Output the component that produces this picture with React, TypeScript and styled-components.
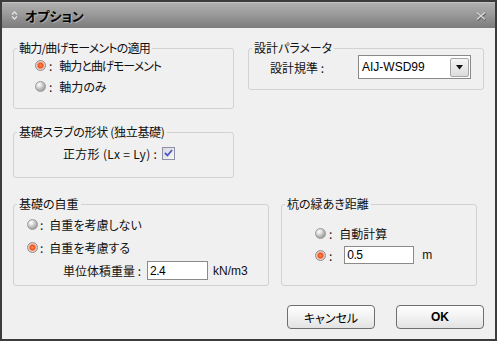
import React from 'react';
import styled, { createGlobalStyle } from 'styled-components';

const Global = createGlobalStyle`
  html, body { margin: 0; padding: 0; background: #f0f0f0; }
  body {
    font-family: "Noto Sans CJK JP", "Liberation Sans", sans-serif;
    font-size: 12px;
    font-feature-settings: "palt";
    color: #111;
  }
  * { box-sizing: border-box; }
`;

const Window = styled.div`
  width: 497px;
  height: 341px;
  border: 2px solid #3c3c3c;
  background: #f0f0f0;
  display: flex;
  flex-direction: column;
`;

const TitleBar = styled.div`
  height: 26px;
  flex: none;
  display: flex;
  align-items: center;
  padding: 0 7px 0 9px;
  background: linear-gradient(#b0b0b0, #9a9a9a 45%, #868686 80%, #7c7c7c);
  border-top: 1px solid #c4c4c4;
`;

const Title = styled.span`
  margin-left: 7px;
  font-weight: bold;
  font-size: 13px;
  color: #050505;
  text-shadow: 1px 1px 0 rgba(255, 255, 255, 0.3);
`;

const CloseBtn = styled.div`
  margin-left: auto;
  width: 14px;
  height: 12px;
  display: flex;
  align-items: center;
  justify-content: center;
`;

const Body = styled.div`
  flex: 1;
  display: flex;
  flex-direction: column;
  padding: 20px 11px 0 11px;
`;

const TopSection = styled.div`
  display: flex;
  align-items: flex-start;
  gap: 14px;
`;

const LeftCol = styled.div`
  display: flex;
  flex-direction: column;
  gap: 23px;
`;

const BottomRow = styled.div`
  display: flex;
  gap: 12px;
  margin-top: 26px;
`;

const Group = styled.div<{ $w: number; $h: number }>`
  width: ${(p) => p.$w}px;
  height: ${(p) => p.$h}px;
  border: 1px solid #d2d2d2;
  border-radius: 3px;
  display: flex;
  flex-direction: column;
`;

const Legend = styled.div<{ $ls?: number }>`
  margin: -8px 0 0 3px;
  padding: 0 2px;
  height: 14px;
  line-height: 14px;
  width: fit-content;
  background: #f0f0f0;
  color: #111;
  letter-spacing: ${(p) => p.$ls ?? 0}px;
`;

const GroupBody = styled.div<{ $pt?: number; $pl?: number; $pr?: number }>`
  display: flex;
  flex-direction: column;
  padding: ${(p) => p.$pt ?? 0}px ${(p) => p.$pr ?? 0}px 0 ${(p) => p.$pl ?? 0}px;
`;

const Row = styled.div<{ $h: number; $indent?: number }>`
  height: ${(p) => p.$h}px;
  display: flex;
  align-items: center;
  padding-left: ${(p) => p.$indent ?? 0}px;
  white-space: nowrap;
`;

const Radio = styled.span<{ $on?: boolean }>`
  flex: none;
  width: 11px;
  height: 11px;
  border-radius: 50%;
  border: 1px solid ${(p) => (p.$on ? '#a08a80' : '#9a9a9a')};
  background: ${(p) =>
    p.$on
      ? 'radial-gradient(circle at 50% 50%, #ff8a50 0, #f0501c 2.5px, #e8c0b0 3.5px, #d8d8d8 4.5px, #bcbcbc 6px)'
      : 'radial-gradient(circle at 35% 30%, #ffffff 0, #e6e6e6 2px, #c4c4c4 4px, #a4a4a4 6px)'};
`;

const Colon = styled.span<{ $ml: number }>`
  margin-left: ${(p) => p.$ml}px;
`;

const RadioText = styled.span<{ $ml: number; $ls?: number }>`
  margin-left: ${(p) => p.$ml}px;
  letter-spacing: ${(p) => p.$ls ?? 0}px;
`;

const Label = styled.span<{ $ls?: number }>`
  letter-spacing: ${(p) => p.$ls ?? 0}px;
`;

const Checkbox = styled.span`
  flex: none;
  margin-left: 5px;
  width: 13px;
  height: 13px;
  border: 1px solid #8e8fa8;
  background: linear-gradient(135deg, #d8d8dc, #f8f8f8);
  display: flex;
  align-items: center;
  justify-content: center;
`;

const Select = styled.div`
  margin-left: auto;
  width: 113px;
  height: 24px;
  border: 1px solid #8a8a8a;
  background: #fff;
  display: flex;
  align-items: center;
  padding: 0 1px 0 3px;
  font-family: "Liberation Sans", Arial, sans-serif;
  font-size: 12px;
  color: #000;
`;

const SelectButton = styled.div`
  margin-left: auto;
  width: 19px;
  height: 19px;
  border: 1px solid #a6a6a6;
  border-radius: 2px;
  background: linear-gradient(#f6f6f6, #dcdcdc);
  display: flex;
  align-items: center;
  justify-content: center;
`;

const TextInput = styled.div<{ $w: number; $h: number; $ml: number }>`
  margin-left: ${(p) => p.$ml}px;
  width: ${(p) => p.$w}px;
  height: ${(p) => p.$h}px;
  border: 1px solid #8a8a8a;
  background: #fff;
  display: flex;
  align-items: center;
  padding-left: 2px;
  font-family: "Liberation Sans", Arial, sans-serif;
  font-size: 12px;
  letter-spacing: -0.5px;
  color: #000;
`;

const Unit = styled.span<{ $ml: number }>`
  margin-left: ${(p) => p.$ml}px;
  font-family: "Liberation Sans", Arial, sans-serif;
  font-size: 12px;
`;

const ButtonRow = styled.div`
  display: flex;
  justify-content: flex-end;
  gap: 21px;
  margin-top: 19px;
`;

const Button = styled.button<{ $bold?: boolean }>`
  width: 88px;
  height: 24px;
  border: 1px solid #6e6e6e;
  border-radius: 4px;
  background: linear-gradient(#fefefe, #f2f2f2 50%, #e2e2e2);
  font-family: ${(p) => (p.$bold ? '"Liberation Sans", Arial, sans-serif' : '"Noto Sans CJK JP", sans-serif')};
  font-feature-settings: "palt";
  font-size: 12px;
  font-weight: ${(p) => (p.$bold ? 'bold' : 'normal')};
  color: #000;
  padding: 0;
`;

export default function App() {
  return (
    <>
      <Global />
      <Window>
        <TitleBar>
          <svg width="7" height="11" viewBox="0 0 7 11">
            <path d="M1 4.5 L3.5 2 L6 4.5" fill="none" stroke="#e4e4e4" strokeWidth="1.3" />
            <path d="M1 6.5 L3.5 9 L6 6.5" fill="none" stroke="#e4e4e4" strokeWidth="1.3" />
          </svg>
          <Title>オプション</Title>
          <CloseBtn>
            <svg width="12" height="10" viewBox="0 0 12 10">
              <path d="M2 1.5 L10 8.5 M10 1.5 L2 8.5" stroke="#5a5a5a" strokeWidth="2" transform="translate(0.5,0.8)" />
              <path d="M2 1.5 L10 8.5 M10 1.5 L2 8.5" stroke="#d8d8d8" strokeWidth="1.6" />
            </svg>
          </CloseBtn>
        </TitleBar>
        <Body>
          <TopSection>
            <LeftCol>
              <Group $w={221} $h={61}>
                <Legend $ls={-0.8}>軸力/曲げモーメントの適用</Legend>
                <GroupBody $pl={21}>
                  <Row $h={21}>
                    <Radio $on />
                    <Colon $ml={3}>:</Colon>
                    <RadioText $ml={7} $ls={-1}>軸力と曲げモーメント</RadioText>
                  </Row>
                  <Row $h={21}>
                    <Radio />
                    <Colon $ml={3}>:</Colon>
                    <RadioText $ml={7}>軸力のみ</RadioText>
                  </Row>
                </GroupBody>
              </Group>
              <Group $w={221} $h={46}>
                <Legend $ls={-0.3}>基礎スラブの形状 (独立基礎)</Legend>
                <GroupBody $pl={49}>
                  <Row $h={28}>
                    <Label $ls={0.3}>正方形 (Lx = Ly) :</Label>
                    <Checkbox>
                      <svg width="9" height="8" viewBox="0 0 9 8">
                        <path d="M1 4 L3.5 6.5 L8 1" fill="none" stroke="#4a56c8" strokeWidth="1.8" />
                      </svg>
                    </Checkbox>
                  </Row>
                </GroupBody>
              </Group>
            </LeftCol>
            <Group $w={236} $h={42}>
              <Legend>設計パラメータ</Legend>
              <GroupBody $pl={21} $pr={12}>
                <Row $h={24}>
                  <Label>設計規準 :</Label>
                  <Select>
                    AIJ-WSD99
                    <SelectButton>
                      <svg width="7" height="5" viewBox="0 0 7 5">
                        <path d="M0 0 H7 L3.5 4.5 Z" fill="#111" />
                      </svg>
                    </SelectButton>
                  </Select>
                </Row>
              </GroupBody>
            </Group>
          </TopSection>
          <BottomRow>
            <Group $w={256} $h={82}>
              <Legend>基礎の自重</Legend>
              <GroupBody $pt={2} $pl={13}>
                <Row $h={23}>
                  <Radio />
                  <Colon $ml={2}>:</Colon>
                  <RadioText $ml={6}>自重を考慮しない</RadioText>
                </Row>
                <Row $h={23}>
                  <Radio $on />
                  <Colon $ml={2}>:</Colon>
                  <RadioText $ml={6}>自重を考慮する</RadioText>
                </Row>
                <Row $h={23} $indent={36}>
                  <Label>単位体積重量 :</Label>
                  <TextInput $w={61} $h={19} $ml={6}>2.4</TextInput>
                  <Unit $ml={5}>kN/m3</Unit>
                </Row>
              </GroupBody>
            </Group>
            <Group $w={196} $h={82}>
              <Legend>杭の緑あき距離</Legend>
              <GroupBody $pt={11} $pl={33}>
                <Row $h={22}>
                  <Radio />
                  <Colon $ml={3}>:</Colon>
                  <RadioText $ml={7}>自動計算</RadioText>
                </Row>
                <Row $h={22}>
                  <Radio $on />
                  <Colon $ml={3}>:</Colon>
                  <TextInput $w={70} $h={18} $ml={12}>0.5</TextInput>
                  <Unit $ml={8}>m</Unit>
                </Row>
              </GroupBody>
            </Group>
          </BottomRow>
          <ButtonRow>
            <Button>キャンセル</Button>
            <Button $bold>OK</Button>
          </ButtonRow>
        </Body>
      </Window>
    </>
  );
}
